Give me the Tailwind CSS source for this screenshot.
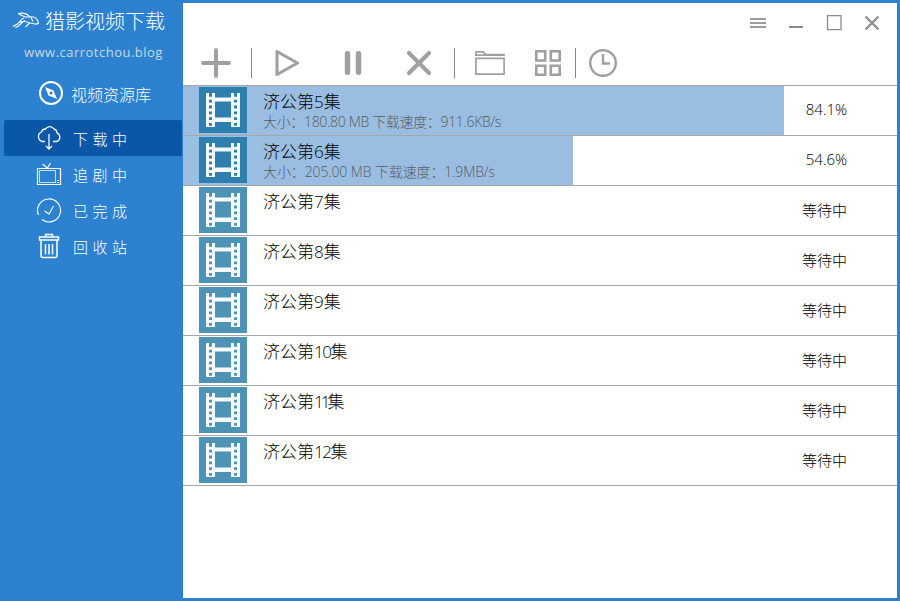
<!DOCTYPE html>
<html lang="zh-CN">
<head>
    <meta charset="UTF-8">
    <meta name="viewport" content="width=device-width, initial-scale=1.0">
    <title>猎影视频下载</title>
    <script src="https://cdn.jsdelivr.net/npm/@tailwindcss/browser@4"></script>
</head>
<body class="bg-[#2c82d0] font-['Open_Sans','Noto_Sans_CJK_SC',sans-serif] font-light">

    <!-- Shared film icon -->
    <svg class="hidden">
        <symbol id="film" viewBox="0 0 48 46">
            <path fill="#fff" fill-opacity=".95" d="M7 6h9v4.500h16V6h9v34h-9v-5H16v5H7zM16 14.500v16h16v-16z" />
            <path stroke="currentColor" stroke-width="3" stroke-dasharray="2.800 3" d="M11.500 7v34M36.500 7v34" />
            <path stroke="currentColor" stroke-width="3" d="M11.500 5v3M36.500 5v3" />
        </symbol>
    </svg>

    <div class="flex w-[900px] h-[601px] overflow-hidden">

        <!-- Sidebar -->
        <aside class="w-[183px] shrink-0 text-white">
            <div class="flex items-center h-[42px] pl-[13px] gap-[6px]">
                <svg class="w-[26px] h-[18px]" viewBox="0 0 26 18" fill="none" stroke="#fff" stroke-width="1.1">
                    <path d="M5 1.500c5-1 9 0 12 3.500 4-1 7 1 8.500 6-3 3-5-.5-9 0l-4 4M5 1.500c3 1.500 5 2.500 7 3.500h5M11 6C8 7 7 10 4.500 12L0 14.500M7 10c5-1 7-1 9 1M8 11.500l-3 3-3 1M12 8.500l-4 3M18 5.500l2 4" />
                </svg>
                <h1 class="pt-px text-[20px] leading-[28px] whitespace-nowrap">猎影视频下载</h1>
            </div>
            <p class="pl-[24px] h-[20px] leading-[20px] text-[13px] tracking-[0.48px] font-normal text-[#cbd7e5] whitespace-nowrap">www.carrotchou.blog</p>
            <div class="flex items-center h-[58px] pl-[38px] pt-[4px]">
                <svg class="size-[26px] mr-[7px]" viewBox="0 0 26 26" fill="none" stroke="#fff">
                    <circle cx="13" cy="13" r="11" stroke-width="2" />
                    <path fill="#fff" fill-rule="evenodd" stroke="none" d="M7 7l8.500 3.500L19 19l-8.500-3.500zM13 11.500a1.500 1.500 0 100 3 1.500 1.500 0 000-3z" />
                </svg>
                <span class="pt-[3px] text-[16px] whitespace-nowrap">视频资源库</span>
            </div>
            <nav class="pl-[4px] pr-[1px] text-[15px] tracking-[4.500px] whitespace-nowrap">
                <a class="flex items-center h-[36px] pl-[32px] gap-[11px] rounded-[2px] bg-[#0b57a7]">
                    <svg class="size-[26px]" viewBox="0 0 26 26" fill="none" stroke="#fff" stroke-width="1.300">
                        <path d="M9 16.500H6.500a5 5 0 01-1-9.500 4 4 0 014-3 5 5 0 018.500 0 4 4 0 013 4 4.500 4.500 0 01-.5 8.500H17M13 9v15M10 21l3 3 3-3" />
                    </svg>
                    <span class="pt-[2px]">下载中</span>
                </a>
                <a class="flex items-center h-[36px] pl-[32px] gap-[11px]">
                    <svg class="size-[26px]" viewBox="0 0 26 26" fill="none" stroke="#fff">
                        <path d="M1.500 7.500h23v16h-23z" stroke-width="1.200" />
                        <path d="M3.500 9.500h16v12h-16z" stroke-opacity=".75" />
                        <path d="M6.500 3l5 4 3-5M21 19.500h2M21 21.500h2" stroke-width="1.200" />
                    </svg>
                    <span class="pt-[2px]">追剧中</span>
                </a>
                <a class="flex items-center h-[36px] pl-[32px] gap-[11px]">
                    <svg class="size-[26px]" viewBox="0 0 26 26" fill="none" stroke="#fff" stroke-width="1.100">
                        <path d="M2.500 18A11.500 11.500 0 1 1 6 22.500M8.500 14l4.500 3L17.500 9" />
                    </svg>
                    <span class="pt-[2px]">已完成</span>
                </a>
                <a class="flex items-center h-[36px] pl-[32px] gap-[11px]">
                    <svg class="size-[26px]" viewBox="0 0 26 26" fill="none" stroke="#fff" stroke-width="1.500">
                        <path d="M3.500 4h19v3h-19zM9.500 4V1.500h7V4M5 7v15.500q0 2 2 2h12q2 0 2-2V7M9.500 11v10.500M13 11v10.500M16.500 11v10.500" />
                    </svg>
                    <span class="pt-[2px]">回收站</span>
                </a>
            </nav>
        </aside>

        <!-- Main window -->
        <main class="w-[714px] shrink-0 mt-[3px] mb-[3px] bg-white">

            <!-- Window buttons -->
            <div class="flex justify-end items-center h-[38px] pt-px pr-[17px] gap-[22px]">
                <svg class="size-4" viewBox="0 0 16 16" stroke="#9c9c9c" stroke-width="1.800"><path d="M0 4h16M0 8h16M0 12h16" /></svg>
                <svg class="size-4" viewBox="0 0 16 16" stroke="#8c8c8c" stroke-width="2"><path d="M1 12h14" /></svg>
                <svg class="size-4" viewBox="0 0 16 16" fill="none" stroke="#8c8c8c" stroke-width="1.300"><path d="M1.500 .7h13.500v14H1.500z" /></svg>
                <svg class="size-4" viewBox="0 0 16 16" stroke="#8c8c8c" stroke-width="2.200"><path d="M1.500 1.500l13 13M14.500 1.500l-13 13" /></svg>
            </div>

            <!-- Toolbar -->
            <div class="flex items-center h-[44px] pl-[18px] text-[#a0a0a0]">
                <svg class="size-[30px]" viewBox="0 0 30 30" stroke="currentColor" stroke-width="4" stroke-linecap="round"><path d="M2 15h26M15 2v26" /></svg>
                <div class="w-px h-[30px] ml-[20px] bg-[#858585]"></div>
                <svg class="size-[30px] ml-[20px]" viewBox="0 0 30 30" fill="none" stroke="currentColor" stroke-width="3" stroke-linejoin="round"><path d="M5 3.500v23L25.500 15z" /></svg>
                <svg class="size-[30px] ml-[36px]" viewBox="0 0 30 30" stroke="currentColor" stroke-width="5.500" stroke-linecap="round"><path d="M9.500 5.700v18.600M20.500 5.700v18.600" /></svg>
                <svg class="size-[30px] ml-[36px]" viewBox="0 0 30 30" stroke="currentColor" stroke-width="4.200" stroke-linecap="round"><path d="M5 5l20 20M25 5L5 25" /></svg>
                <div class="w-px h-[30px] ml-[20px] bg-[#858585]"></div>
                <svg class="size-[30px] ml-[20px]" viewBox="0 0 30 30" fill="none" stroke="currentColor" stroke-width="1.700"><path d="M.9 10.400h28.200v15.800H.9zM.9 7V3.900h7.500l2 2.600h19M0 7.200h30" /></svg>
                <svg class="size-[30px] ml-[28px]" viewBox="0 0 30 30" fill="none" stroke="currentColor" stroke-width="2.600"><path d="M3.300 3.300h8.900v9.200H3.300zM17.800 3.300h8.900v9.200h-8.900zM3.300 17.800h8.900v8.900H3.300zM17.800 17.800h8.900v8.900h-8.900z" /></svg>
                <div class="w-px h-[30px] ml-[12px] bg-[#858585]"></div>
                <svg class="size-[30px] ml-[12px]" viewBox="0 0 30 30" fill="none" stroke="currentColor" stroke-width="2.400"><circle cx="15" cy="15" r="12.800" /><path d="M15 6v9.500h7" /></svg>
            </div>

            <!-- Download list -->
            <div id="list" class="border-b border-[#a6a6a6]"></div>
        </main>
    </div>

    <script>
        const items = [
            { num: 5, info: '大小：180.80 MB 下载速度：911.6KB/s', progress: 84.1, tracking: 'tracking-[-0.33px]' },
            { num: 6, info: '大小：205.00 MB 下载速度：1.9MB/s', progress: 54.6, tracking: 'tracking-[-0.12px]' },
            { num: 7 },
            { num: 8 },
            { num: 9 },
            { num: 10 },
            { num: 11 },
            { num: 12 }
        ];

        // Two-digit numbers are set a little tighter
        function numClass(num) {
            if (num === 11) return 'tracking-[-3px]';
            return num > 9 ? 'tracking-[-1.5px]' : '';
        }

        document.getElementById('list').innerHTML = items.map(item => `
            <div class="grid grid-cols-1 h-[50px] border-t border-[#a6a6a6]">
                <div class="col-start-1 row-start-1 h-[49px] bg-[#99bee2]" style="width: ${Math.ceil((item.progress || 0) * 7.14)}px"></div>
                <div class="col-start-1 row-start-1 flex h-[49px] pl-[16px] pt-[1px]">
                    <svg class="w-[48px] h-[46px] shrink-0 ${item.progress ? 'bg-[#2d7faf] text-[#2d7faf]' : 'bg-[#4d93b5] text-[#4d93b5]'}"><use href="#film" /></svg>
                    <div class="w-[505px] pl-[16px] pt-[5px] whitespace-nowrap">
                        <div class="text-[17px] leading-[20px] text-black">济公第<span class="${numClass(item.num)}">${item.num}</span>集</div>
                        <div class="text-[14px] leading-[20px] text-[#5c5c5c] ${item.tracking || ''}">${item.info || ''}</div>
                    </div>
                    <div class="w-[145px] text-center text-[15px] text-black ${item.progress ? 'pl-[4px] leading-[45px]' : 'leading-[46px]'}">${item.progress ? item.progress + '%' : '等待中'}</div>
                </div>
            </div>`).join('');
    </script>

</body>
</html>
